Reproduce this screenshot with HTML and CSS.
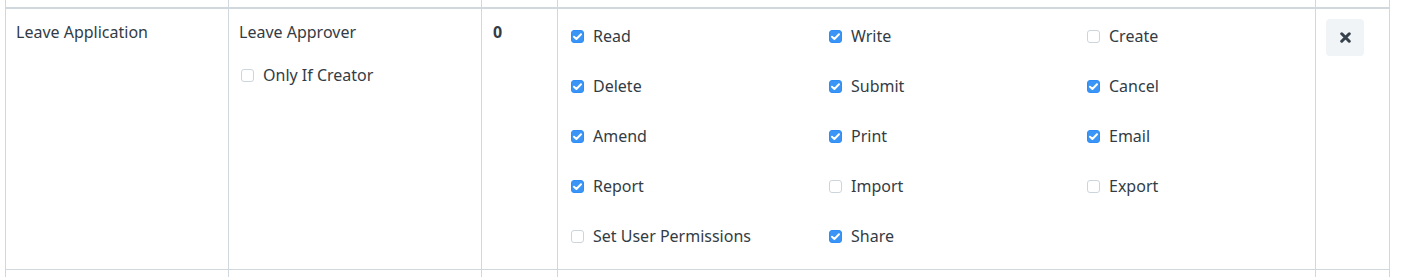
FILE: index.html
```html
<!DOCTYPE html>
<html lang="en">
<head>
<meta charset="utf-8">
<title>Permissions</title>
<link rel="stylesheet" href="styles.css">
</head>
<body>
<div class="grid">
  <div class="hcell"></div><div class="hcell"></div><div class="hcell"></div><div class="hcell"></div><div class="hcell last"></div>

  <div class="cell doc">Leave Application</div>
  <div class="cell role">
    <div class="role-name">Leave Approver</div>
    <label class="chk"><span class="box"></span><span>Only If Creator</span></label>
  </div>
  <div class="cell level">0</div>
  <div class="cell perms">
    <label class="chk"><span class="box on"></span><span>Read</span></label>
    <label class="chk"><span class="box on"></span><span>Write</span></label>
    <label class="chk"><span class="box"></span><span>Create</span></label>
    <label class="chk"><span class="box on"></span><span>Delete</span></label>
    <label class="chk"><span class="box on"></span><span>Submit</span></label>
    <label class="chk"><span class="box on"></span><span>Cancel</span></label>
    <label class="chk"><span class="box on"></span><span>Amend</span></label>
    <label class="chk"><span class="box on"></span><span>Print</span></label>
    <label class="chk"><span class="box on"></span><span>Email</span></label>
    <label class="chk"><span class="box on"></span><span>Report</span></label>
    <label class="chk"><span class="box"></span><span>Import</span></label>
    <label class="chk"><span class="box"></span><span>Export</span></label>
    <label class="chk"><span class="box"></span><span>Set User Permissions</span></label>
    <label class="chk"><span class="box on"></span><span>Share</span></label>
  </div>
  <div class="cell act last">
    <button class="remove" type="button" aria-label="Remove">
      <svg width="11" height="11" viewBox="0 0 10 10"><path d="M1.6 1.6 L8.4 8.4 M8.4 1.6 L1.6 8.4" stroke="#36414c" stroke-width="2.8" stroke-linecap="round"/></svg>
    </button>
  </div>

  <div class="cell"></div><div class="cell"></div><div class="cell"></div><div class="cell"></div><div class="cell last"></div>
</div>
</body>
</html>
```

FILE: styles.css
```css
html, body {
  margin: 0;
  padding: 0;
  background: #fff;
}
body {
  font-family: "Noto Sans", "Open Sans", sans-serif;
  font-size: 16px;
  color: #333c45;
  overflow: hidden;
  height: 277px;
}
.grid {
  display: grid;
  grid-template-columns: 223px 253px 76px 758px 75px;
  grid-template-rows: 9px 261px 7px;
  margin-left: 5px;
  width: 1385px;
}
.hcell {
  border-left: 1px solid #d1d8dd;
  border-bottom: 2px solid #d1d8dd;
  box-sizing: border-box;
}
.hcell.last, .cell.last {
  border-right: 1px solid #d1d8dd;
}
.cell {
  border-left: 1px solid #d1d8dd;
  border-bottom: 1px solid #d1d8dd;
  box-sizing: border-box;
  padding: 12px 10px;
  line-height: 22px;
}
.grid > .cell:nth-last-child(-n+5) {
  border-bottom: none;
  padding: 0;
}
.level { font-weight: 700; padding-left: 11px; }
.role-name { margin-bottom: 21px; }
.chk {
  display: flex;
  align-items: center;
  gap: 9px;
  height: 22px;
}
.role .chk { padding-left: 2px; }
.box {
  width: 13px;
  height: 13px;
  box-sizing: border-box;
  border: 1px solid #cdd5dc;
  border-radius: 3px;
  background: #fff;
  flex: none;
}
.box.on {
  border-color: #2e8ef5;
  background: #3b95f6 url("data:image/svg+xml;utf8,<svg xmlns='http://www.w3.org/2000/svg' viewBox='0 0 13 13'><path d='M3 6.7 L5.4 9 L10 4.2' fill='none' stroke='white' stroke-width='2' stroke-linecap='round' stroke-linejoin='round'/></svg>") center/13px 13px no-repeat;
}
.perms {
  padding: 16px 0 0 13px;
  display: grid;
  grid-template-columns: 258px 258px 1fr;
  grid-auto-rows: 22px;
  row-gap: 28px;
  align-content: start;
}
.act {
  padding: 10px 0 0 10px;
}
.remove {
  width: 38px;
  height: 37px;
  border: none;
  border-radius: 4px;
  background: #f0f4f7;
  display: flex;
  align-items: center;
  justify-content: center;
  padding: 0;
}
```
